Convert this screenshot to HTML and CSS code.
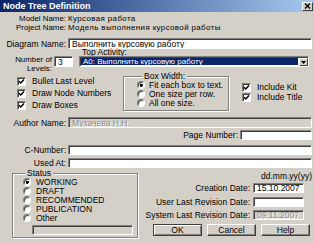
FILE: index.html
```html
<!DOCTYPE html>
<html>
<head>
<meta charset="utf-8">
<link rel="stylesheet" href="styles.css">
</head>
<body>
<div class="dlg">
  <div class="title">
    <span class="title-text">Node Tree Definition</span>
    <span class="close"><svg width="7" height="6" viewBox="0 0 7 6"><path d="M1 0.5 L6 5.5 M6 0.5 L1 5.5" stroke="#000" stroke-width="1.4"/></svg></span>
  </div>
  <div class="body">
    <div class="irow"><span class="lbl">Model Name:</span><span class="val">Курсовая работа</span></div>
    <div class="irow"><span class="lbl">Project Name:</span><span class="val">Модель выполнения курсовой работы</span></div>

    <div class="frow diagram"><span class="lbl">Diagram Name:</span><div class="field">Выполнить курсовую работу</div></div>
    <div class="top-act">Top Activity:</div>

    <div class="levels">
      <div class="lv-lbl"><span class="lv1">Number of</span><span class="lv2">Levels:</span></div>
      <div class="field num">3</div>
      <div class="combo">
        <div class="combo-sel">A0: Выполнить курсовую работу</div>
        <div class="combo-btn"><svg width="5" height="3" viewBox="0 0 5 3"><path d="M0 0 H5 L2.5 3 Z" fill="#000"/></svg></div>
      </div>
    </div>

    <div class="opts">
      <div class="checks">
        <div class="chk"><span class="box"><svg width="7" height="7" viewBox="0 0 7 7"><path d="M1 3.2 L2.8 5 L6 1.6" stroke="#000" stroke-width="1.5" fill="none"/></svg></span>Bullet Last Level</div>
        <div class="chk"><span class="box"><svg width="7" height="7" viewBox="0 0 7 7"><path d="M1 3.2 L2.8 5 L6 1.6" stroke="#000" stroke-width="1.5" fill="none"/></svg></span>Draw Node Numbers</div>
        <div class="chk"><span class="box"><svg width="7" height="7" viewBox="0 0 7 7"><path d="M1 3.2 L2.8 5 L6 1.6" stroke="#000" stroke-width="1.5" fill="none"/></svg></span>Draw Boxes</div>
      </div>
      <fieldset class="group bw">
        <legend>Box Width:</legend>
        <div class="rad"><span class="radio on"></span>Fit each box to text.</div>
        <div class="rad"><span class="radio"></span>One size per row.</div>
        <div class="rad"><span class="radio"></span>All one size.</div>
      </fieldset>
      <div class="checks inc">
        <div class="chk"><span class="box"><svg width="7" height="7" viewBox="0 0 7 7"><path d="M1 3.2 L2.8 5 L6 1.6" stroke="#000" stroke-width="1.5" fill="none"/></svg></span>Include Kit</div>
        <div class="chk"><span class="box"><svg width="7" height="7" viewBox="0 0 7 7"><path d="M1 3.2 L2.8 5 L6 1.6" stroke="#000" stroke-width="1.5" fill="none"/></svg></span>Include Title</div>
      </div>
    </div>

    <div class="frow author"><span class="lbl">Author Name:</span><div class="field dis">Мухачева Н.Н.</div></div>
    <div class="prow"><span class="plbl">Page Number:</span><div class="field pnum"></div></div>
    <div class="frow cnum"><span class="lbl">C-Number:</span><div class="field"></div></div>
    <div class="frow used"><span class="lbl">Used At:</span><div class="field"></div></div>

    <div class="bottom">
      <fieldset class="group status">
        <legend>Status</legend>
        <div class="rad"><span class="radio on"></span>WORKING</div>
        <div class="rad"><span class="radio"></span>DRAFT</div>
        <div class="rad"><span class="radio"></span>RECOMMENDED</div>
        <div class="rad"><span class="radio"></span>PUBLICATION</div>
        <div class="rad"><span class="radio"></span>Other</div>
        <div class="field dis other"></div>
      </fieldset>
      <div class="dates">
        <div class="hint">dd.mm.yy(yy)</div>
        <div class="drow d1"><span class="dlbl">Creation Date:</span><div class="field dfield">15.10.2007</div></div>
        <div class="drow d2"><span class="dlbl">User Last Revision Date:</span><div class="field dfield"></div></div>
        <div class="drow d3"><span class="dlbl">System Last Revision Date:</span><div class="field dfield dis">09.11.2007</div></div>
        <div class="btns">
          <div class="btn def">OK</div>
          <div class="btn">Cancel</div>
          <div class="btn">Help</div>
        </div>
      </div>
    </div>
  </div>
</div>
</body>
</html>
```

FILE: styles.css
```css
* { box-sizing: border-box; }
html, body { margin: 0; padding: 0; }
body {
  width: 314px; height: 243px; overflow: hidden;
  background: #d4d0c8;
  font-family: "Liberation Sans", Arial, sans-serif;
  font-size: 8.5px; color: #000;
}
.dlg { width: 314px; height: 243px; background: #d4d0c8; display: flex; flex-direction: column; }
.title {
  height: 12px; flex: none;
  background: linear-gradient(to right, #0a246a, #a6caf0);
  display: flex; align-items: center; padding: 0 1px 0 3px;
}
.title-text { flex: 1; color: #fff; font-weight: bold; font-size: 9px; line-height: 12px; }
.close {
  width: 11px; height: 9px; background: #d4d0c8;
  border: 1px solid; border-color: #fff #404040 #404040 #fff;
  display: flex; align-items: center; justify-content: center;
}
.body { padding: 2px 2px 0 0; flex: 1; }

.irow { display: flex; height: 9px; line-height: 9px; font-size: 7.9px; white-space: nowrap; }
.lbl { width: 66px; flex: none; text-align: right; white-space: nowrap; }
.val { margin-left: 2px; letter-spacing: 0.4px; }

.field {
  background: #fff;
  border: 1px solid; border-color: #808080 #fff #fff #808080;
  box-shadow: inset 1px 1px 0 #404040;
  padding-left: 3px; white-space: nowrap; overflow: hidden;
  display: flex; align-items: center;
}
.field.dis { background: #d4d0c8; color: #8c8c8c; text-shadow: 1px 1px 0 #fff; }

.frow { display: flex; align-items: center; height: 10px; }
.frow .field { flex: 1; margin-left: 2px; height: 100%; }
.diagram { margin-top: 6px; height: 11px; }
.top-act { margin-left: 82px; height: 7px; line-height: 7px; }

.levels { display: flex; align-items: flex-start; height: 16px; }
.lv-lbl { width: 52px; flex: none; display: flex; flex-direction: column; align-items: flex-end; margin-top: -1px; font-size: 7.9px; }
.lv1, .lv2 { height: 9px; line-height: 9px; white-space: nowrap; }
.num { width: 19px; height: 11px; margin-left: 2px; flex: none; }
.combo {
  flex: 1; margin-left: 6px; margin-right: 3px; height: 11px;
  background: #fff;
  border: 1px solid; border-color: #808080 #fff #fff #808080;
  box-shadow: inset 1px 1px 0 #404040;
  padding: 1px 0 0 1px; display: flex;
}
.combo-sel {
  flex: 1; background: #0a246a; color: #fff; margin: 0 1px 1px 0;
  padding-left: 2px; font-size: 8px; line-height: 7px; white-space: nowrap; overflow: hidden;
}
.combo-btn {
  width: 9px; flex: none; background: #d4d0c8;
  border: 1px solid; border-color: #fff #404040 #404040 #fff;
  display: flex; align-items: center; justify-content: center;
}

.opts { display: flex; align-items: flex-start; }
.checks { width: 123px; flex: none; padding-left: 17px; margin-top: 3px; }
.chk { display: flex; align-items: center; height: 12px; gap: 6px; white-space: nowrap; }
.box {
  width: 9px; height: 9px; flex: none; background: #fff;
  border: 1px solid; border-color: #808080 #fff #fff #808080;
  box-shadow: inset 1px 1px 0 #404040;
  display: flex; align-items: center; justify-content: center;
}
.checks.inc { width: auto; padding-left: 0; margin-left: 13px; margin-top: 10px; }
.inc .chk { height: 10px; gap: 6px; }

.group {
  margin: 0; min-width: 0;
  border: 1px solid #808080;
  box-shadow: inset 1px 1px 0 #fff, 1px 1px 0 #fff;
}
.group legend { padding: 0 2px; line-height: 8px; background: #d4d0c8; }
.bw { width: 106px; flex: none; padding: 0 0 3px 13px; }
.bw legend { margin-left: 5px; }
.rad { display: flex; align-items: center; height: 9px; gap: 4px; white-space: nowrap; }
.radio {
  width: 8px; height: 8px; flex: none; border-radius: 50%;
  background: #fff;
  border: 1px solid; border-color: #808080 #fff #fff #808080;
  box-shadow: inset 1px 1px 0 #404040;
}
.radio.on { background: radial-gradient(circle at 55% 55%, #000 0 1.4px, #fff 1.6px); }

.author { margin-top: 6px; height: 11px; }
.prow { display: flex; justify-content: flex-end; align-items: center; margin-top: 2px; height: 10px; }
.plbl { margin-right: 2px; }
.pnum { width: 72px; height: 100%; flex: none; }
.cnum { margin-top: 5px; }
.used { margin-top: 3px; }

.bottom { display: flex; align-items: flex-start; margin-top: 1px; }
.status { width: 126px; flex: none; margin-left: 12px; padding: 0 0 2px 10px; }
.status legend { margin-left: 2px; }
.status .rad { gap: 5px; }
.other { width: 101px; height: 10px; margin: 3px 0 0 9px; }

.dates { margin-left: auto; width: 163px; display: flex; flex-direction: column; }
.hint { text-align: right; margin-top: 3px; line-height: 8px; height: 8px; }
.drow { display: flex; justify-content: flex-end; align-items: center; height: 10px; padding-right: 8px; }
.dlbl { margin-right: 3px; white-space: nowrap; }
.dfield { width: 51px; height: 100%; flex: none; }
.d1 { margin-top: 3px; }
.d2 { margin-top: 4px; }
.d3 { margin-top: 3px; }
.btns { display: flex; gap: 5px; padding-left: 4px; margin-top: 4px; height: 12px; }
.btn {
  width: 49px; height: 12px; flex: none;
  border: 1px solid; border-color: #fff #404040 #404040 #fff;
  box-shadow: inset -1px -1px 0 #808080;
  text-align: center; line-height: 10px;
}
.btn.def { border-color: #404040; box-shadow: inset 1px 1px 0 #fff, inset -1px -1px 0 #808080; }
```
